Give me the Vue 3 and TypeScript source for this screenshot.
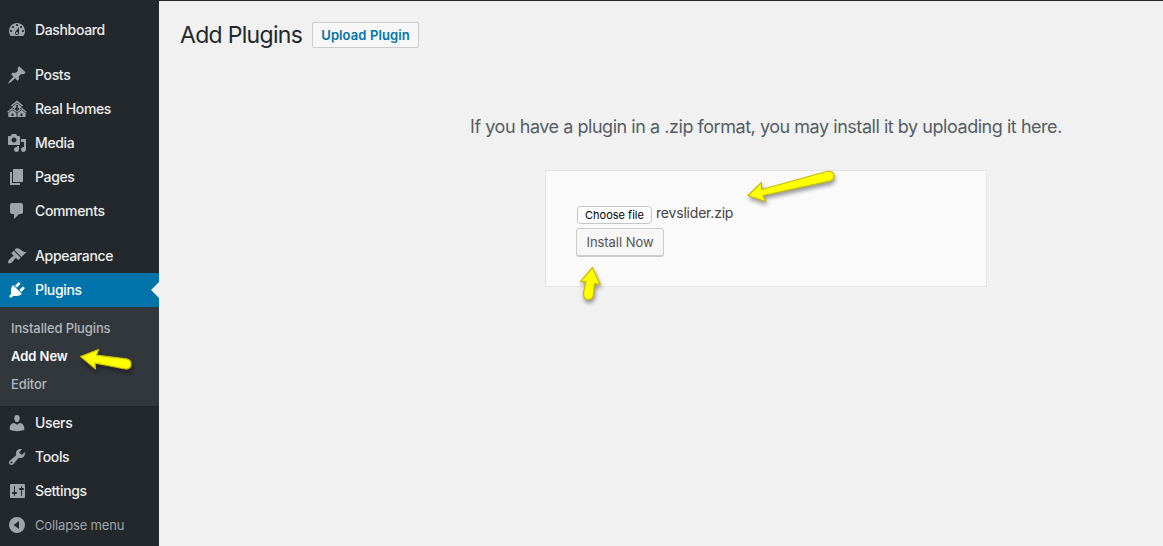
<script setup lang="ts">
interface MenuItem {
  label: string
  icon: string
  gap?: boolean
  current?: boolean
}

const topItems: MenuItem[] = [
  {
    label: 'Dashboard',
    icon: 'M3.76 16h12.48c1.1-1.37 1.76-3.11 1.76-5 0-4.42-3.58-8-8-8s-8 3.58-8 8c0 1.89.66 3.63 1.76 5zM10 4c.55 0 1 .45 1 1s-.45 1-1 1-1-.45-1-1 .45-1 1-1zM6 6c.55 0 1 .45 1 1s-.45 1-1 1-1-.45-1-1 .45-1 1-1zm8 0c.55 0 1 .45 1 1s-.45 1-1 1-1-.45-1-1 .45-1 1-1zm-5.37 5.55L12 7v6c0 1.1-.9 2-2 2s-2-.9-2-2c0-.57.24-1.08.63-1.45zM4 10c.55 0 1 .45 1 1s-.45 1-1 1-1-.45-1-1 .45-1 1-1zm12 0c.55 0 1 .45 1 1s-.45 1-1 1-1-.45-1-1 .45-1 1-1zm-5 3c0-.55-.45-1-1-1s-1 .45-1 1 .45 1 1 1 1-.45 1-1z',
  },
  {
    label: 'Posts',
    gap: true,
    icon: 'M10.44 3.02l1.82-1.82 6.36 6.35-1.83 1.82c-1.05-.68-2.48-.57-3.41.36l-.75.75c-.92.93-1.04 2.35-.35 3.41l-1.83 1.82-2.41-2.41-2.8 2.79c-.42.42-3.38 2.71-3.8 2.29s1.86-3.39 2.28-3.81l2.79-2.79L4.1 9.36l1.83-1.82c1.05.69 2.48.57 3.4-.36l.75-.75c.93-.92 1.05-2.35.36-3.41z',
  },
  {
    label: 'Real Homes',
    icon: 'M10 1.5l6 4.900-.9 1.100L10 3.500 4.900 7.500 4 6.400zM10 4.200l4.300 3.500v3.200L10 7.800v0L5.700 10.900V7.700zM9 5.900v1.900h2V5.900zM5.500 8.500l5.200 4.300-.8 1-4.400-3.600-4.500 3.600-.8-1zM14.500 8.500l5.200 4.300-.8 1-4.400-3.600-4.400 3.600-.8-1zM5.500 11l4 3.300V18H1.300v-3.700zM4.500 14.500V17h2v-2.500zM14.500 11l4.100 3.300V18h-8.100v-3.700zM13.500 14.500V17h2v-2.500z',
  },
  {
    label: 'Media',
    icon: 'M13 11V4c0-.55-.45-1-1-1h-1.67L9 1H5L3.67 3H2c-.55 0-1 .45-1 1v7c0 .55.45 1 1 1h10c.55 0 1-.45 1-1zM7 4.5c1.38 0 2.5 1.12 2.5 2.5S8.38 9.5 7 9.5 4.5 8.38 4.5 7 5.62 4.5 7 4.5zM14 6h5v10.5c0 1.38-1.12 2.5-2.5 2.5S14 17.88 14 16.5s1.12-2.5 2.5-2.5c.17 0 .34.02.5.05V9h-3V6zm-4 8.05V13h2v3.5c0 1.38-1.12 2.5-2.5 2.5S7 17.88 7 16.5 8.12 14 9.5 14c.17 0 .34.02.5.05z',
  },
  {
    label: 'Pages',
    icon: 'M6 15V2h10v13H6zm-1 1h8v2H3V5h2v11z',
  },
  {
    label: 'Comments',
    icon: 'M5 2h9c1.1 0 2 .9 2 2v7c0 1.1-.9 2-2 2h-2l-5 5v-5H5c-1.1 0-2-.9-2-2V4c0-1.1.9-2 2-2z',
  },
  {
    label: 'Appearance',
    gap: true,
    icon: 'M14.48 11.06L7.41 3.99l1.5-1.5c.5-.56 2.3-.47 3.51.32 1.21.8 1.43 1.28 2.91 2.1 1.18.64 2.45 1.26 4.45.85zm-.71.71L6.7 4.7 4.93 6.47c-.39.39-.39 1.02 0 1.41l1.06 1.06c.39.39.39 1.03 0 1.42-.6.6-1.43 1.11-2.21 1.69-.35.26-.7.53-1.01.84C1.43 14.23.4 16.08 1.4 17.07c.99 1 2.84-.03 4.18-1.36.31-.31.58-.66.85-1.02.57-.78 1.08-1.61 1.69-2.21.39-.39 1.02-.39 1.41 0l1.06 1.06c.39.39 1.02.39 1.41 0z',
  },
  {
    label: 'Plugins',
    current: true,
    icon: 'M13.11 4.36L9.87 7.6 8 5.73l3.24-3.24c.35-.34 1.05-.2 1.56.32.52.51.66 1.21.31 1.55zm-8 1.77l.91-1.12 9.01 9.01-1.19.84c-.71.71-2.63 1.16-3.82 1.16H6.14L4.9 17.26c-.59.59-1.54.59-2.12 0-.59-.58-.59-1.53 0-2.12l1.24-1.24v-3.88c0-1.13.4-3.19 1.09-3.89zm7.26 3.97l3.24-3.24c.34-.35 1.04-.21 1.55.31.52.51.66 1.21.31 1.55l-3.24 3.25z',
  },
]

const bottomItems: MenuItem[] = [
  {
    label: 'Users',
    icon: 'M10 9.25c-2.27 0-2.73-3.44-2.73-3.44C7 4.02 7.82 2 9.97 2c2.16 0 2.98 2.02 2.71 3.81 0 0-.41 3.44-2.68 3.44zm0 2.57L12.72 10c2.39 0 4.52 2.33 4.52 4.53v2.49s-3.65 1.13-7.24 1.13c-3.65 0-7.24-1.13-7.24-1.13v-2.49c0-2.25 1.94-4.48 4.47-4.48z',
  },
  {
    label: 'Tools',
    icon: 'M16.68 9.77c-1.34 1.34-3.3 1.67-4.95.99l-5.41 6.52c-.99.99-2.59.99-3.58 0s-.99-2.59 0-3.57l6.52-5.42c-.68-1.65-.35-3.61.99-4.95 1.28-1.28 3.12-1.62 4.72-1.06l-2.89 2.89 2.82 2.82 2.86-2.87c.53 1.58.18 3.39-1.08 4.65zM3.81 16.21c.4.39 1.04.39 1.43 0 .4-.4.4-1.04 0-1.43-.39-.4-1.03-.4-1.43 0-.39.39-.39 1.03 0 1.43z',
  },
  {
    label: 'Settings',
    icon: 'M18 16V4c0-.55-.45-1-1-1H4c-.55 0-1 .45-1 1v12c0 .55.45 1 1 1h13c.55 0 1-.45 1-1zM8 11h1c.55 0 1 .45 1 1s-.45 1-1 1H8v1.5c0 .28-.22.5-.5.5s-.5-.22-.5-.5V13H6c-.55 0-1-.45-1-1s.45-1 1-1h1V5.500c0-.28.22-.5.5-.5s.5.22.5.5V11zm6-2h-1c-.55 0-1-.45-1-1s.45-1 1-1h1V5.500c0-.28.22-.5.5-.5s.5.22.5.5V7h1c.55 0 1 .45 1 1s-.45 1-1 1h-1v5.500c0 .28-.22.5-.5.5s-.5-.22-.5-.5V9z',
  },
]

const submenu = [
  { label: 'Installed Plugins', active: false },
  { label: 'Add New', active: true },
  { label: 'Editor', active: false },
]
</script>

<template>
  <div class="admin">
    <nav class="sidebar">
      <a
        v-for="item in topItems"
        :key="item.label"
        class="item"
        :class="{ gap: item.gap, current: item.current }"
      >
        <svg class="icon" viewBox="0 0 20 20"><path fill-rule="evenodd" :d="item.icon" /></svg>
        <span class="label">{{ item.label }}</span>
      </a>
      <div class="submenu">
        <a v-for="s in submenu" :key="s.label" class="sub" :class="{ active: s.active }">{{ s.label }}</a>
      </div>
      <a v-for="item in bottomItems" :key="item.label" class="item">
        <svg class="icon" viewBox="0 0 20 20"><path fill-rule="evenodd" :d="item.icon" /></svg>
        <span class="label">{{ item.label }}</span>
      </a>
      <a class="item collapse">
        <svg class="icon" viewBox="0 0 20 20">
          <path fill-rule="evenodd" d="M10 2a8 8 0 1 0 0 16a8 8 0 1 0 0-16zM12 6v8l-5.500-4z" />
        </svg>
        <span>Collapse menu</span>
      </a>
    </nav>

    <main class="content">
      <header class="heading">
        <h1>Add Plugins</h1>
        <a class="upload">Upload Plugin</a>
      </header>
      <section class="uploader">
        <p class="help">If you have a plugin in a .zip format, you may install it by uploading it here.</p>
        <div class="form">
          <div class="file">
            <button class="choose" type="button">Choose file</button>
            <span class="filename">revslider.zip</span>
          </div>
          <button class="install" type="button">Install Now</button>
        </div>
      </section>
    </main>

    <!-- Pointer annotations lying over the page -->
    <svg class="arrows" viewBox="0 0 1163 546">
      <path d="M748 195.500L761.500 182.500L761.500 189.500L827 171.500C835 169.500 836.500 179.500 829.500 181.200L763 195.500L765.500 201.500Z" />
      <path d="M80.500 356.500L98.500 349.500L96.500 355.200L126.500 358.800C133 360 132.500 369.500 125.500 369L95 363.200L95.500 369Z" />
      <path d="M592.500 267.500L580.500 281.700L586 281.500L583.500 293C582.500 301 592.500 302 593.500 294.500L594.500 283.500L600 284.500Z" />
    </svg>
  </div>
</template>

<style>
body {
  margin: 0;
}
</style>

<style scoped>
.admin {
  position: relative;
  display: flex;
  width: 1163px;
  height: 546px;
  overflow: hidden;
  background: #f1f1f1;
  font-family: Inter, 'Liberation Sans', sans-serif;
}
.sidebar {
  flex: none;
  box-sizing: border-box;
  width: 159px;
  padding-top: 13px;
  background: #23282d;
}
.item {
  position: relative;
  display: flex;
  align-items: center;
  gap: 8px;
  height: 34px;
  padding-left: 7px;
  color: #eee;
  font-size: 14px;
  font-weight: 550;
  letter-spacing: -0.35px;
  white-space: nowrap;
}
.label {
  padding-bottom: 2px;
}
.gap {
  margin-top: 11px;
}
.icon {
  flex: none;
  width: 20px;
  height: 20px;
  fill: #a0a5aa;
}
.current {
  background: #0073aa;
  color: #fff;
}
.current .icon {
  fill: #fff;
}
.current::after {
  content: '';
  position: absolute;
  right: 0;
  top: 9px;
  border: 8px solid transparent;
  border-left-width: 0;
  border-right-color: #f1f1f1;
}
.submenu {
  box-sizing: border-box;
  height: 99px;
  padding: 7px 11px 8px;
  background: #32373c;
}
.sub {
  display: block;
  height: 28px;
  line-height: 28px;
  color: #b4b9be;
  font-size: 13px;
  font-weight: 450;
  letter-spacing: -0.12px;
  white-space: nowrap;
}
.sub.active {
  color: #fff;
  font-weight: 600;
  letter-spacing: -0.05px;
}
.collapse {
  color: #a0a5aa;
  font-size: 13px;
  font-weight: 400;
  letter-spacing: -0.15px;
}
.content {
  flex: 1;
  border-top: 1px solid #23282d;
}
.heading {
  display: flex;
  align-items: center;
  gap: 9px;
  height: 26px;
  padding: 21px 0 0 21px;
}
h1 {
  width: 123px;
  margin: 0;
  color: #23282d;
  font-size: 23px;
  font-weight: 400;
  letter-spacing: -0.69px;
  line-height: 26px;
  white-space: nowrap;
}
.upload {
  box-sizing: border-box;
  width: 107px;
  height: 26px;
  border: 1px solid #ccc;
  border-radius: 2px;
  background: #f7f7f7;
  color: #0073aa;
  font-size: 13px;
  font-weight: 600;
  letter-spacing: 0.1px;
  line-height: 24px;
  text-align: center;
  white-space: nowrap;
}
.uploader {
  display: flex;
  flex-direction: column;
  align-items: center;
  padding: 66px 0 0 210px;
}
.help {
  margin: 0;
  color: #555d66;
  font-size: 18px;
  letter-spacing: -0.46px;
  line-height: 26px;
  white-space: nowrap;
}
.form {
  box-sizing: border-box;
  width: 442px;
  height: 117px;
  margin: 30px 0 0;
  padding: 35px 30px;
  border: 1px solid #e5e5e5;
  background: #fafafa;
}
.file {
  display: flex;
  gap: 4px;
  height: 22px;
  padding-left: 1px;
}
.choose {
  box-sizing: border-box;
  width: 75px;
  height: 18px;
  padding: 0;
  border: 1px solid #c6c6c6;
  border-radius: 4px;
  background: #fff;
  color: #000;
  font: 11px/16px Inter, sans-serif;
  white-space: nowrap;
}
.filename {
  color: #444;
  font-size: 14px;
  letter-spacing: -0.2px;
  line-height: 14px;
}
.install {
  display: block;
  box-sizing: border-box;
  width: 88px;
  height: 28px;
  padding: 0;
  border: 1px solid #ccc;
  border-radius: 3px;
  background: #f7f7f7;
  box-shadow: 0 1px 0 #ccc;
  color: #555;
  font: 13px/26px Inter, sans-serif;
  letter-spacing: -0.05px;
  white-space: nowrap;
}
.arrows {
  position: absolute;
  inset: 0;
  width: 1163px;
  height: 546px;
  fill: #ff0;
  stroke: #c5bd00;
  stroke-width: 1.2;
  stroke-linejoin: round;
  filter: drop-shadow(1px 3px 2px rgba(0, 0, 0, 0.4));
  pointer-events: none;
}
</style>
